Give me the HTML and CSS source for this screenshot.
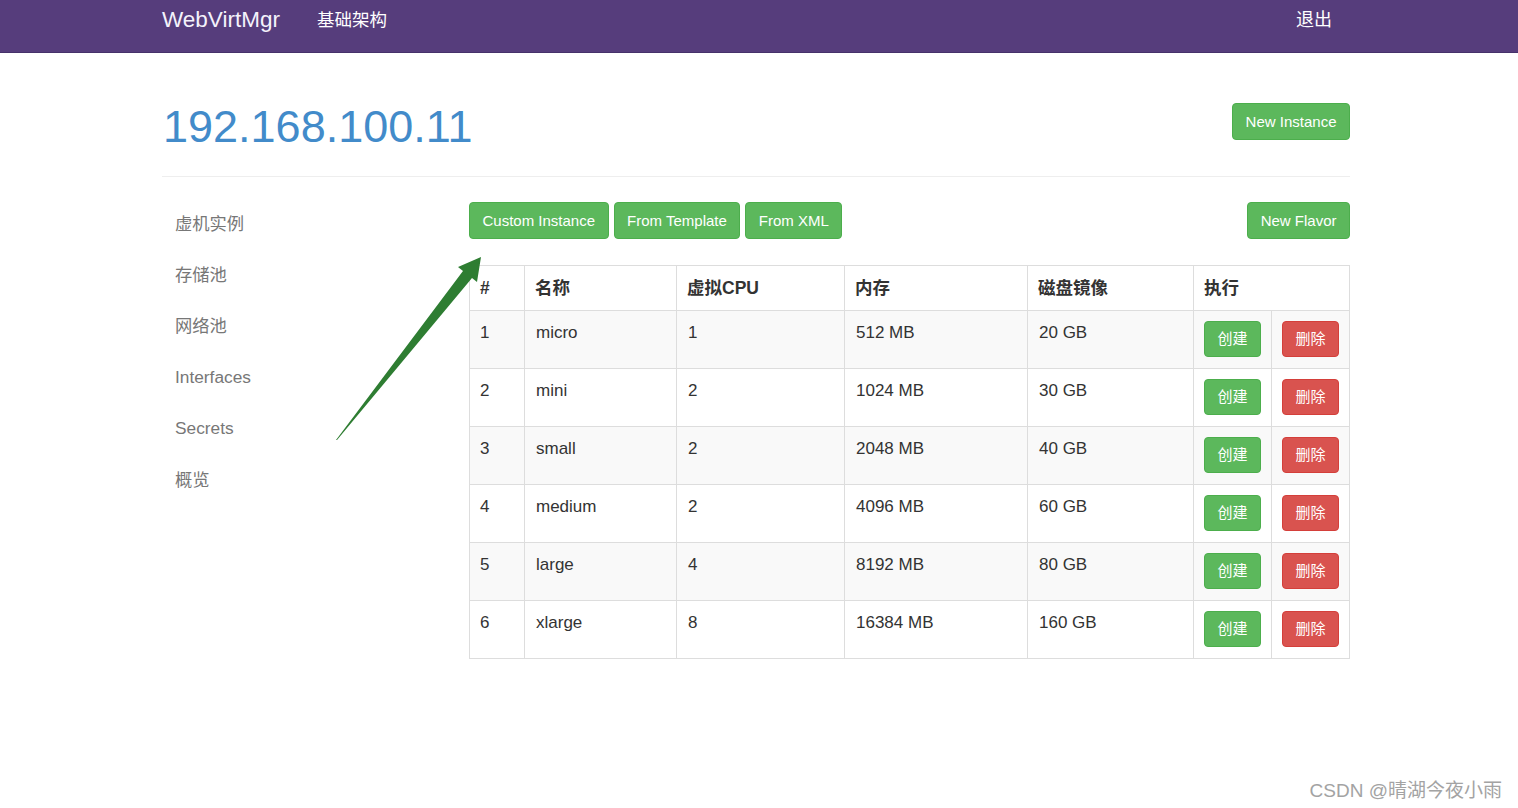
FILE: index.html
```html
<!DOCTYPE html>
<html lang="zh">
<head>
<meta charset="utf-8">
<title>WebVirtMgr</title>
<link rel="stylesheet" href="styles.css">
</head>
<body>
<nav class="navbar">
  <div class="navbar-inner">
    <a class="brand" href="#">WebVirtMgr</a>
    <a class="nav-link" href="#">基础架构</a>
    <a class="nav-link logout" href="#">退出</a>
  </div>
</nav>

<div class="container">
  <div class="page-header">
    <h1 class="title">192.168.100.11</h1>
    <a class="btn btn-success" href="#">New Instance</a>
  </div>

  <div class="content">
    <ul class="sidebar">
      <li><a href="#">虚机实例</a></li>
      <li><a href="#">存储池</a></li>
      <li><a href="#">网络池</a></li>
      <li><a href="#">Interfaces</a></li>
      <li><a href="#">Secrets</a></li>
      <li><a href="#">概览</a></li>
    </ul>

    <div class="main">
      <div class="toolbar">
        <a class="btn btn-success" href="#">Custom Instance</a>
        <a class="btn btn-success" href="#">From Template</a>
        <a class="btn btn-success" href="#">From XML</a>
        <a class="btn btn-success push-right" href="#">New Flavor</a>
      </div>

      <table class="flavors">
        <colgroup>
          <col class="c-id"><col class="c-name"><col class="c-cpu"><col class="c-mem"><col class="c-disk"><col class="c-act"><col class="c-act2">
        </colgroup>
        <thead>
          <tr><th>#</th><th>名称</th><th>虚拟CPU</th><th>内存</th><th>磁盘镜像</th><th colspan="2">执行</th></tr>
        </thead>
        <tbody>
          <tr><td>1</td><td>micro</td><td>1</td><td>512 MB</td><td>20 GB</td><td><a class="btn btn-sm btn-success" href="#">创建</a></td><td><a class="btn btn-sm btn-danger" href="#">删除</a></td></tr>
          <tr><td>2</td><td>mini</td><td>2</td><td>1024 MB</td><td>30 GB</td><td><a class="btn btn-sm btn-success" href="#">创建</a></td><td><a class="btn btn-sm btn-danger" href="#">删除</a></td></tr>
          <tr><td>3</td><td>small</td><td>2</td><td>2048 MB</td><td>40 GB</td><td><a class="btn btn-sm btn-success" href="#">创建</a></td><td><a class="btn btn-sm btn-danger" href="#">删除</a></td></tr>
          <tr><td>4</td><td>medium</td><td>2</td><td>4096 MB</td><td>60 GB</td><td><a class="btn btn-sm btn-success" href="#">创建</a></td><td><a class="btn btn-sm btn-danger" href="#">删除</a></td></tr>
          <tr><td>5</td><td>large</td><td>4</td><td>8192 MB</td><td>80 GB</td><td><a class="btn btn-sm btn-success" href="#">创建</a></td><td><a class="btn btn-sm btn-danger" href="#">删除</a></td></tr>
          <tr><td>6</td><td>xlarge</td><td>8</td><td>16384 MB</td><td>160 GB</td><td><a class="btn btn-sm btn-success" href="#">创建</a></td><td><a class="btn btn-sm btn-danger" href="#">删除</a></td></tr>
        </tbody>
      </table>
    </div>
  </div>
</div>

<svg class="arrow" width="160" height="200" viewBox="0 0 160 200" aria-hidden="true">
  <polygon points="6,190 133,21 128,17 151,7 147,32 142,28 7,190" fill="#2e7d32"/>
</svg>

<div class="watermark">CSDN @晴湖今夜小雨</div>
</body>
</html>
```

FILE: styles.css
```css
* { box-sizing: border-box; }

html, body {
  margin: 0;
  padding: 0;
  background: #fff;
  font-family: "Liberation Sans", Arial, "Noto Sans CJK SC", sans-serif;
  color: #333;
}

a { text-decoration: none; }

.navbar {
  height: 53px;
  background: #563d7c;
  border-bottom: 1px solid #46316a;
}

.navbar-inner {
  width: 1188px;
  margin-left: 162px;
  display: flex;
  align-items: flex-start;
  height: 40px;
}

.brand {
  font-size: 22.5px;
  line-height: 40px;
  color: #f4f2fb;
}

.nav-link {
  font-size: 17.5px;
  line-height: 40px;
  color: #fff;
  margin-left: 37px;
}

.nav-link.logout {
  margin-left: auto;
  margin-right: 18px;
  font-size: 18px;
}

.container {
  width: 1188px;
  margin-left: 162px;
}

.page-header {
  display: flex;
  justify-content: space-between;
  align-items: flex-start;
  margin-top: 50px;
  padding-bottom: 25px;
  border-bottom: 1px solid #eee;
}

.title {
  margin: -0.5px 0 0 1px;
  font-size: 45px;
  line-height: 48px;
  font-weight: 400;
  color: #428bca;
}

.btn {
  display: inline-block;
  font-size: 15px;
  line-height: 21px;
  padding: 7px 12.5px;
  border: 1px solid transparent;
  border-radius: 4px;
  color: #fff;
  white-space: nowrap;
  text-align: center;
}

.btn-success {
  background: #5cb85c;
  border-color: #4cae4c;
}

.btn-danger {
  background: #d9534f;
  border-color: #d43f3a;
}

.btn-sm {
  width: 57px;
  padding: 7px 0;
  line-height: 20px;
  font-size: 15px;
}

.content {
  display: grid;
  grid-template-columns: 307px 881px;
}

.sidebar {
  list-style: none;
  margin: 22px 0 0;
  padding: 0;
}

.sidebar li a {
  display: block;
  font-size: 17.3px;
  line-height: 24px;
  padding: 13.6px 13px 13.5px;
  color: #777;
}

.main {
  padding-top: 25px;
}

.toolbar {
  display: flex;
  gap: 5px;
}

.push-right { margin-left: auto; }

.flavors {
  margin-top: 26px;
  width: 880px;
  border-collapse: collapse;
  table-layout: fixed;
  font-size: 17px;
}

.c-id { width: 55px; }
.c-name { width: 152px; }
.c-cpu { width: 168px; }
.c-mem { width: 183px; }
.c-disk { width: 166px; }
.c-act { width: 78px; }
.c-act2 { width: 78px; }

.flavors th,
.flavors td {
  border: 1px solid #ddd;
  text-align: left;
  vertical-align: top;
  line-height: 22px;
  padding: 11px 10px;
  color: #333;
}

.flavors th {
  font-weight: 700;
  font-size: 17.5px;
}

.flavors td {
  padding: 11px 10px 24px;
}

.flavors td:nth-child(2),
.flavors td:nth-child(3),
.flavors td:nth-child(4),
.flavors td:nth-child(5) {
  padding-left: 11px;
}

.flavors td:nth-child(6),
.flavors td:nth-child(7) {
  padding: 10px 10px 11px;
}

.flavors tbody tr:nth-child(odd) td {
  background: #f9f9f9;
}

.arrow {
  position: absolute;
  left: 330px;
  top: 250px;
  pointer-events: none;
}

.watermark {
  position: absolute;
  right: 16px;
  top: 779px;
  font-size: 19px;
  line-height: 23px;
  color: #a3a3a3;
}
```
